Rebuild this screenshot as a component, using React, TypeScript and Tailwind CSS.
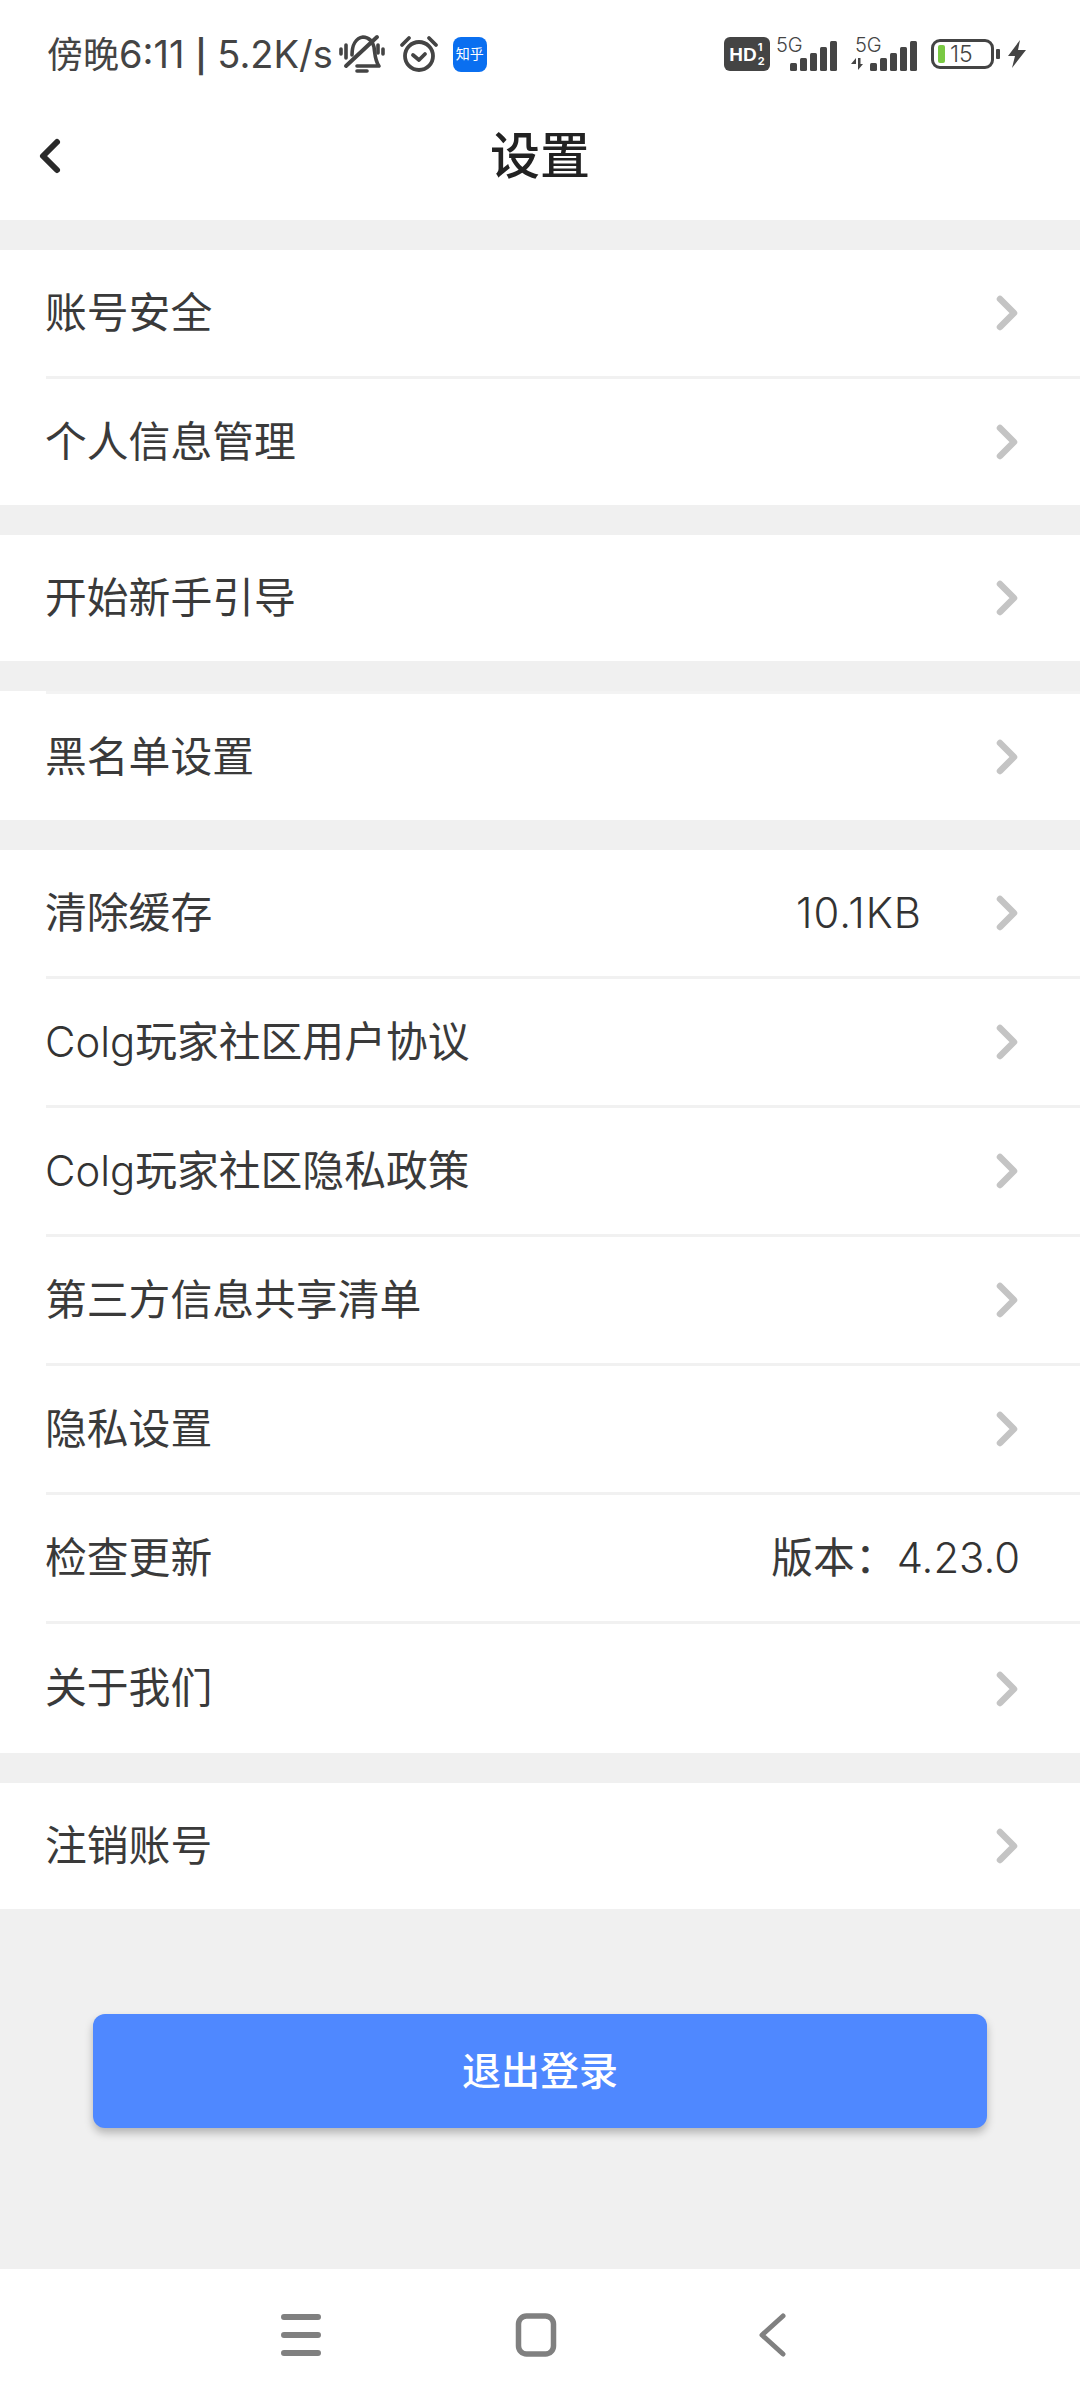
import type { ReactNode } from "react";

const font = { fontFamily: 'Inter, "Noto Sans CJK SC", "Noto Sans", sans-serif' };

function Chevron() {
  return (
    <svg width="24" height="36" viewBox="0 0 24 36" className="shrink-0">
      <path d="M4 4 L18 18 L4 32" fill="none" stroke="#c4c4c4" strokeWidth="6.5" strokeLinecap="round" strokeLinejoin="round" />
    </svg>
  );
}

function Row({ label, value, noArrow, last, tall }: { label: ReactNode; value?: ReactNode; noArrow?: boolean; last?: boolean; tall?: boolean }) {
  const height = tall ? "h-[129px]" : last ? "h-[126px]" : "h-[129px] border-b-[3px] border-[#f1f1f1]";
  return (
    <div className="bg-white pl-[46px]">
      <div className={`flex items-center pr-[60px] ${height}`}>
        <span className="-ml-[1px] flex-1 pt-[1px] text-[41.8px] leading-none text-[#3a3a3a]">{label}</span>
        {value && <span className={`pt-[1px] text-[41.8px] leading-none text-[#3a3a3a] ${noArrow ? "" : "mr-[74px]"}`}>{value}</span>}
        {!noArrow && <Chevron />}
      </div>
    </div>
  );
}

function Latin({ children, wide }: { children: ReactNode; wide?: boolean }) {
  return <span className={`font-light text-[#333333] ${wide ? "tracking-[1px]" : ""}`}>{children}</span>;
}

function Gap() {
  return <div className="h-[30px] bg-[#f0f0f0]" />;
}

function Signal({ arrows }: { arrows?: boolean }) {
  return (
    <div className={`relative h-[34px] ${arrows ? "w-[66px]" : "w-[61px]"}`}>
      <span className={`absolute top-[-2px] text-[20px] font-light leading-none text-[#444444] ${arrows ? "left-[4px]" : "left-0"}`}>5G</span>
      <svg width="47" height="30" viewBox="0 0 47 30" className="absolute bottom-0 right-0">
        <rect x="0" y="22" width="7" height="8" rx="1.5" fill="#444" />
        <rect x="10" y="17" width="7" height="13" rx="1.5" fill="#444" />
        <rect x="20" y="12" width="7" height="18" rx="1.5" fill="#444" />
        <rect x="30" y="6" width="7" height="24" rx="1.5" fill="#444" />
        <rect x="40" y="0" width="7" height="30" rx="1.5" fill="#444" />
      </svg>
      {arrows && (
        <svg width="14" height="14" viewBox="0 0 14 14" className="absolute bottom-0 left-0">
          <path d="M0 7 L5 7 L5 1 Z M7 1 L7 13 L12 7 L9.5 7 L9.5 1 Z" fill="#444" />
        </svg>
      )}
    </div>
  );
}

export default function App() {
  return (
    <div className="flex h-[2400px] w-[1080px] flex-col bg-[#f0f0f0]" style={font}>
      <div className="bg-white">
        <div className="flex h-[100px] items-center justify-between pl-[47px] pr-[53px] pt-[8px]">
          <div className="flex items-center text-[#444444]">
            <span className="text-[36px] leading-none">
              傍晚<span className="text-[38px]">6:11 <span className="text-[32px] font-semibold">|</span> 5.2K/s</span>
            </span>
            <svg width="46" height="40" viewBox="0 0 46 40" className="ml-[6px]">
              <g fill="none" stroke="#444" strokeWidth="3.6" strokeLinecap="round" strokeLinejoin="round">
                <path d="M13 21 C13 11 17 4 24 3 C30 3 34 8 35 13 C36 20 36 27 40 32 L18 32" />
                <path d="M18 37 L28 37" />
                <path d="M7 32 L38 3" strokeWidth="4" />
                <path d="M2 15 L2 20 M7 11 L7 24 M39 11 L39 19 M44 15 L44 20" />
              </g>
            </svg>
            <svg width="40" height="38" viewBox="0 0 40 38" className="ml-[14px]">
              <g fill="none" stroke="#444" strokeWidth="3.8" strokeLinecap="round" strokeLinejoin="round">
                <circle cx="20" cy="21" r="14" />
                <path d="M14 20 L20 25 L26 19" />
                <path d="M3 10 L10 3 M30 3 L37 10" />
              </g>
            </svg>
            <div className="ml-[14px] flex h-[35px] w-[34px] items-center justify-center rounded-[8px] bg-[#0a6ff0] text-[14px] leading-none text-white">
              知乎
            </div>
          </div>
          <div className="flex items-center">
            <div className="flex h-[34px] w-[46px] items-center justify-center rounded-[6px] bg-[#444444] text-white">
              <span className="text-[19px] font-bold leading-none" style={{ fontFamily: '"Liberation Sans", sans-serif' }}>HD</span>
              <span className="ml-[1px] flex flex-col text-[11px] font-bold leading-[14px]">
                <span>1</span>
                <span>2</span>
              </span>
            </div>
            <div className="ml-[6px]"><Signal /></div>
            <div className="ml-[14px]"><Signal arrows /></div>
            <div className="ml-[14px] flex h-[30px] w-[63px] items-center rounded-[9px] border-[3px] border-[#444444] pl-[4px]">
              <div className="h-[18px] w-[7px] rounded-[2px] bg-[#7ac943]" />
              <span className="ml-[5px] text-[23px] font-light leading-none text-[#444444]">15</span>
            </div>
            <div className="ml-[2px] h-[10px] w-[4px] rounded-[1px] bg-[#444444]" />
            <svg width="20" height="28" viewBox="0 0 20 28" className="ml-[7px]">
              <path d="M13 0 L1 16 L8 16 L5 28 L19 10 L11 10 Z" fill="#444" />
            </svg>
          </div>
        </div>
        <div className="relative flex h-[120px] items-center justify-center pb-[8px]">
          <svg width="28" height="40" viewBox="0 0 28 40" className="absolute left-[36px] top-[37px]">
            <path d="M21 5 L7 19 L21 33" fill="none" stroke="#2a2a2a" strokeWidth="6" strokeLinecap="round" strokeLinejoin="round" />
          </svg>
          <h1 className="text-[50px] font-medium leading-none text-[#222222]">设置</h1>
        </div>
      </div>

      <Gap />
      <Row label="账号安全" />
      <Row label="个人信息管理" last />
      <Gap />
      <Row label="开始新手引导" last />
      <Gap />
      <div className="bg-white">
        <div className="ml-[46px] h-[3px] bg-[#f3f3f3]" />
      </div>
      <Row label="黑名单设置" last />
      <Gap />
      <Row label="清除缓存" value={<Latin wide>10.1KB</Latin>} />
      <Row label={<><Latin>Colg</Latin>玩家社区用户协议</>} />
      <Row label={<><Latin>Colg</Latin>玩家社区隐私政策</>} />
      <Row label="第三方信息共享清单" />
      <Row label="隐私设置" />
      <Row label="检查更新" value={<>版本：<Latin>4.23.0</Latin></>} noArrow />
      <Row label="关于我们" tall />
      <Gap />
      <Row label="注销账号" last />

      <div className="flex flex-1 flex-col justify-between">
        <div className="px-[93px] pt-[105px]">
          <button className="flex h-[114px] w-full items-center justify-center rounded-[12px] bg-[#4f88ff] text-[39px] font-medium text-white shadow-[0_5px_8px_rgba(0,0,0,0.25)]">
            退出登录
          </button>
        </div>
        <div className="flex h-[131px] items-center justify-center bg-white pr-[14px]">
          <svg width="40" height="42" viewBox="0 0 40 42" className="mr-[194px]">
            <path d="M3 3 H37 M3 21 H37 M3 39 H37" stroke="#808080" strokeWidth="6" strokeLinecap="round" />
          </svg>
          <svg width="42" height="46" viewBox="0 0 42 46" className="mr-[201px]">
            <rect x="3.5" y="4" width="35" height="38" rx="8" fill="none" stroke="#808080" strokeWidth="5.5" />
          </svg>
          <svg width="28" height="44" viewBox="0 0 28 44">
            <path d="M25 3 L4 22 L25 41" fill="none" stroke="#808080" strokeWidth="5" strokeLinecap="round" strokeLinejoin="round" />
          </svg>
        </div>
      </div>
    </div>
  );
}
